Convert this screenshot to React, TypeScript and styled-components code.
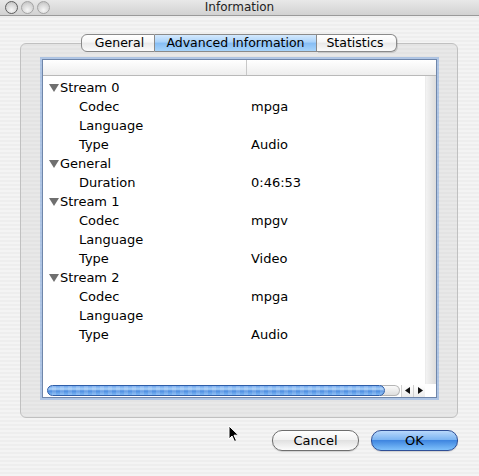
import React from "react";
import styled, { createGlobalStyle } from "styled-components";

const GlobalStyle = createGlobalStyle`
  html, body {
    margin: 0;
    padding: 0;
  }
  body {
    font-family: "DejaVu Sans", "Liberation Sans", sans-serif;
    font-size: 13px;
    color: #000;
  }
  * {
    box-sizing: border-box;
  }
`;

type Row = { label: string; value?: string; group?: boolean };

const rows: Row[] = [
  { label: "Stream 0", group: true },
  { label: "Codec", value: "mpga" },
  { label: "Language" },
  { label: "Type", value: "Audio" },
  { label: "General", group: true },
  { label: "Duration", value: "0:46:53" },
  { label: "Stream 1", group: true },
  { label: "Codec", value: "mpgv" },
  { label: "Language" },
  { label: "Type", value: "Video" },
  { label: "Stream 2", group: true },
  { label: "Codec", value: "mpga" },
  { label: "Language" },
  { label: "Type", value: "Audio" },
];

const tabs = [
  { label: "General", width: 74 },
  { label: "Advanced Information", width: 162 },
  { label: "Statistics", width: 80 },
];

const App = () => {
  return (
    <>
      <GlobalStyle />
      <Window>
        <TitleBar>
          <Lights>
            <Light $dark />
            <Light />
            <Light />
          </Lights>
          <Title>Information</Title>
        </TitleBar>
        <Content>
          <TabStrip>
            {tabs.map((t, i) => (
              <Tab
                key={t.label}
                $width={t.width}
                $active={i === 1}
                $first={i === 0}
                $last={i === tabs.length - 1}
              >
                {t.label}
              </Tab>
            ))}
          </TabStrip>
          <Panel>
            <Table>
              <Header>
                <HeaderCell />
                <HeaderCell />
              </Header>
              <Body>
                {rows.map((r, i) => (
                  <TableRow key={i}>
                    <LabelCell $group={r.group}>
                      {r.group && <Triangle />}
                      {r.label}
                    </LabelCell>
                    <ValueCell>{r.value}</ValueCell>
                  </TableRow>
                ))}
              </Body>
              <VTrack />
              <HScroll>
                <Thumb />
                <TrackEnd />
                <Arrow>
                  <svg width="6" height="7" viewBox="0 0 6 7">
                    <path d="M5 0 L0 3.5 L5 7 Z" fill="#111" />
                  </svg>
                </Arrow>
                <Arrow>
                  <svg width="6" height="7" viewBox="0 0 6 7">
                    <path d="M1 0 L6 3.5 L1 7 Z" fill="#111" />
                  </svg>
                </Arrow>
              </HScroll>
              <Corner />
            </Table>
          </Panel>
          <Buttons>
            <Button>Cancel</Button>
            <Button $primary>OK</Button>
          </Buttons>
          <Cursor>
            <svg width="12" height="18" viewBox="0 0 12 18">
              <path
                d="M1 1 L1 14 L4 11 L6.5 16.5 L8.5 15.6 L6 10.2 L10.5 10.2 Z"
                fill="#000"
                stroke="#fff"
                strokeWidth="1"
              />
            </svg>
          </Cursor>
        </Content>
      </Window>
    </>
  );
};

export default App;

const stripes = `repeating-linear-gradient(
  to bottom,
  #eeeeee 0px,
  #eeeeee 2px,
  #f4f4f4 2px,
  #f4f4f4 4px
)`;

const Window = styled.div`
  width: 479px;
  height: 476px;
  display: flex;
  flex-direction: column;
  background: ${stripes};
  overflow: hidden;
`;

const TitleBar = styled.div`
  height: 16px;
  position: relative;
  display: flex;
  align-items: center;
  justify-content: center;
  background: linear-gradient(to bottom, #e8e8e8, #d2d2d2);
  border-bottom: 1px solid #9a9a9a;
`;

const Lights = styled.div`
  position: absolute;
  left: 5px;
  top: 1px;
  display: flex;
  gap: 3px;
`;

const Light = styled.div<{ $dark?: boolean }>`
  width: 13px;
  height: 13px;
  border-radius: 50%;
  border: 1px solid ${(p) => (p.$dark ? "#5e5e5e" : "#a4a4a4")};
  background: radial-gradient(
    circle at 50% 72%,
    #f6f6f6 0%,
    #d8d8d8 55%,
    #b8b8b8 100%
  );
`;

const Title = styled.div`
  font-size: 12px;
  color: #222;
  line-height: 15px;
`;

const Content = styled.div`
  flex: 1;
  position: relative;
  padding: 18px 21px 0 20px;
  display: flex;
  flex-direction: column;
`;

const TabStrip = styled.div`
  display: flex;
  justify-content: center;
  margin-bottom: -9px;
  position: relative;
  z-index: 1;
`;

const Tab = styled.div<{
  $width: number;
  $active?: boolean;
  $first?: boolean;
  $last?: boolean;
}>`
  width: ${(p) => p.$width}px;
  height: 18px;
  line-height: 16px;
  font-size: 12.5px;
  text-align: center;
  padding-left: ${(p) => (p.$first ? "3px" : "0")};
  padding-right: ${(p) => (p.$last ? "3px" : "0")};
  border: 1px solid #8a8a8a;
  border-left: ${(p) => (p.$first ? "1px solid #8a8a8a" : "none")};
  border-radius: ${(p) =>
    p.$first ? "6px 0 0 6px" : p.$last ? "0 6px 6px 0" : "0"};
  color: #000;
  background: ${(p) =>
    p.$active
      ? "linear-gradient(to bottom, #d4e9fd 0%, #a9d2fa 45%, #86bdf4 50%, #a7d4fb 100%)"
      : "linear-gradient(to bottom, #ffffff 0%, #f6f6f6 45%, #e9e9e9 50%, #fbfbfb 100%)"};
  box-shadow: ${(p) => (p.$last ? "1px 1px 0 rgba(0,0,0,0.12)" : "none")};
  white-space: nowrap;
`;

const Panel = styled.div`
  height: 375px;
  padding: 15px 20px 19px 21px;
  border: 1px solid #c0c0c0;
  border-radius: 6px;
  background: repeating-linear-gradient(
    to bottom,
    #e3e3e3 0px,
    #e3e3e3 2px,
    #e8e8e8 2px,
    #e8e8e8 4px
  );
  display: flex;
`;

const Table = styled.div`
  flex: 1;
  display: grid;
  grid-template-columns: 1fr 11px;
  grid-template-rows: 16px 1fr 13px;
  background: #fff;
  border: 1px solid #6f86aa;
  box-shadow: 0 0 0 2px rgba(130, 170, 225, 0.55);
`;

const Header = styled.div`
  grid-column: 1 / 3;
  display: grid;
  grid-template-columns: 204px 1fr;
  background: linear-gradient(to bottom, #ffffff, #eeeeee);
  border-bottom: 1px solid #b9b9b9;
`;

const HeaderCell = styled.div`
  border-right: 1px solid #c8c8c8;
  &:last-child {
    border-right: none;
  }
`;

const Body = styled.div`
  padding-top: 2px;
  overflow: hidden;
`;

const TableRow = styled.div`
  display: grid;
  grid-template-columns: 204px 1fr;
  height: 19px;
  line-height: 19px;
`;

const LabelCell = styled.div<{ $group?: boolean }>`
  display: flex;
  align-items: center;
  padding-left: ${(p) => (p.$group ? "6px" : "36px")};
  white-space: nowrap;
`;

const Triangle = styled.span`
  width: 0;
  height: 0;
  border-left: 5px solid transparent;
  border-right: 5px solid transparent;
  border-top: 8px solid #6f6f6f;
  margin-right: 1px;
  margin-top: 1px;
`;

const ValueCell = styled.div`
  padding-left: 4px;
`;

const VTrack = styled.div`
  background: linear-gradient(to right, #f3f3f3, #dcdcdc);
  border-left: 1px solid #ececec;
`;

const HScroll = styled.div`
  display: flex;
  align-items: center;
  padding-left: 4px;
  background: #fff;
`;

const Thumb = styled.div`
  flex: 1;
  height: 11px;
  border-radius: 6px;
  border: 1px solid #2f5ea8;
  position: relative;
  z-index: 1;
  background: repeating-linear-gradient(
      to right,
      rgba(255, 255, 255, 0) 0px,
      rgba(255, 255, 255, 0) 4px,
      rgba(255, 255, 255, 0.15) 4px,
      rgba(255, 255, 255, 0.15) 8px
    ),
    linear-gradient(to bottom, #6fa6ec 0%, #a9d0f8 35%, #4d8de0 55%, #7fb8f4 100%);
`;

const TrackEnd = styled.div`
  width: 20px;
  height: 11px;
  margin-left: -5px;
  margin-right: 1px;
  border: 1px solid #b5b5b5;
  border-left: none;
  border-radius: 0 6px 6px 0;
  background: linear-gradient(to bottom, #fafafa, #dedede);
`;

const Arrow = styled.div`
  width: 12px;
  height: 12px;
  display: flex;
  align-items: center;
  justify-content: center;
  border-left: 1px solid #d0d0d0;
  background: linear-gradient(to bottom, #ffffff, #ececec);
`;

const Corner = styled.div`
  background: #fff;
`;

const Buttons = styled.div`
  display: flex;
  justify-content: flex-end;
  gap: 12px;
  margin-top: 12px;
`;

const Button = styled.div<{ $primary?: boolean }>`
  width: 87px;
  height: 21px;
  line-height: 19px;
  text-align: center;
  border-radius: 10px;
  border: 1px solid ${(p) => (p.$primary ? "#2f4f96" : "#6e6e6e")};
  color: #000;
  background: ${(p) =>
    p.$primary
      ? "linear-gradient(to bottom, #b8d8fb 0%, #7db5f2 45%, #3f86e0 50%, #7fc1fb 100%)"
      : "linear-gradient(to bottom, #ffffff 0%, #f2f2f2 45%, #e1e1e1 50%, #fcfcfc 100%)"};
  box-shadow: 0 1px 1px rgba(0, 0, 0, 0.15);
`;

const Cursor = styled.div`
  position: absolute;
  left: 228px;
  top: 409px;
  line-height: 0;
`;
